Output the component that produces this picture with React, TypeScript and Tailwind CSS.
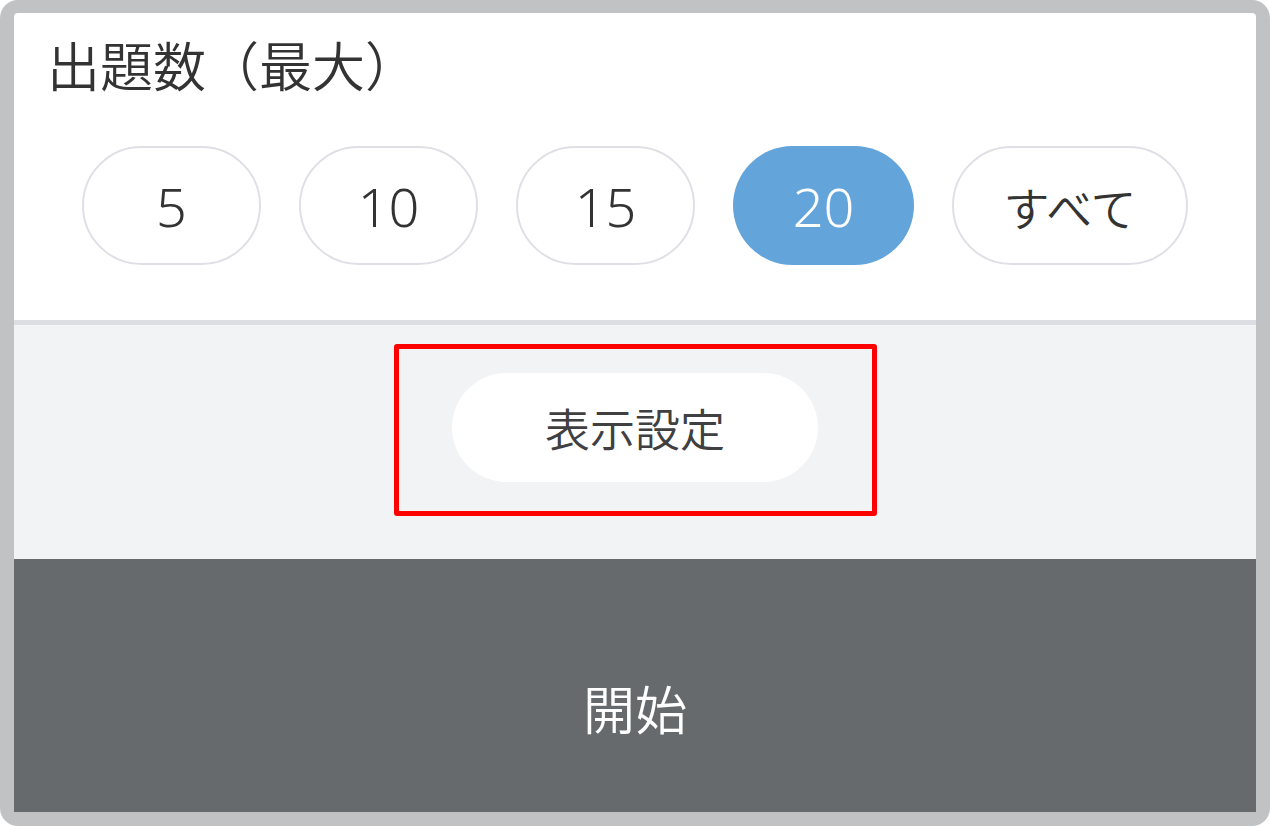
import React from "react";

const jp = { fontFamily: '"Noto Sans CJK JP", "Noto Sans", sans-serif' };
const num = { fontFamily: '"Noto Sans", "Noto Sans CJK JP", sans-serif' };

export default function App() {
  const opts = [
    { label: "5", w: "w-[179px]", digit: true },
    { label: "10", w: "w-[179px]", digit: true },
    { label: "15", w: "w-[179px]", digit: true },
    { label: "20", w: "w-[181px]", digit: true, active: true },
    { label: "すべて", w: "w-[236px]", digit: false },
  ];
  return (
    <div className="w-[1270px] h-[826px] bg-white" style={jp}>
      <div className="w-[1270px] h-[826px] rounded-[18px] border-[#c1c2c4] border-t-[13px] border-l-[14px] border-r-[14px] border-b-[14px] bg-[#c1c2c4]">
        <div className="flex flex-col h-full rounded-t-[4px] overflow-hidden">
          <div className="bg-white h-[307px] pl-[33px] pt-[25px]">
            <div className="text-[53px] leading-none text-[#333333] font-[350]">出題数（最大）</div>
            <div className="flex justify-center gap-[38px] mt-[55px] pr-[33px]">
              {opts.map((o) => (
                <div
                  key={o.label}
                  className={`${o.w} h-[119px] rounded-full flex items-center justify-center ${
                    o.active
                      ? "bg-[#63a4da] text-white"
                      : "bg-white border-2 border-[#dfe0e6] text-[#333333]"
                  }`}
                >
                  {o.digit ? (
                    <span className="text-[54px] leading-none font-light" style={num}>
                      {o.label}
                    </span>
                  ) : (
                    <span className="text-[46px] leading-none font-[350]">{o.label}</span>
                  )}
                </div>
              ))}
            </div>
          </div>
          <div className="h-[5px] bg-[#dddee4]" />
          <div className="bg-[#f2f3f5] h-[234px] flex justify-center pt-[19px]">
            <div className="w-[483px] h-[172px] border-[5px] border-[#ff0000] rounded-[3px] flex justify-center pt-[24px]">
              <div className="w-[366px] h-[109px] bg-white rounded-full flex items-center justify-center text-[45px] leading-none text-[#404040] font-[350]">
                表示設定
              </div>
            </div>
          </div>
          <div className="flex-1 bg-[#666a6d] flex justify-center pt-[123px]">
            <div className="text-[52px] leading-none text-white font-[350]">開始</div>
          </div>
        </div>
      </div>
    </div>
  );
}
